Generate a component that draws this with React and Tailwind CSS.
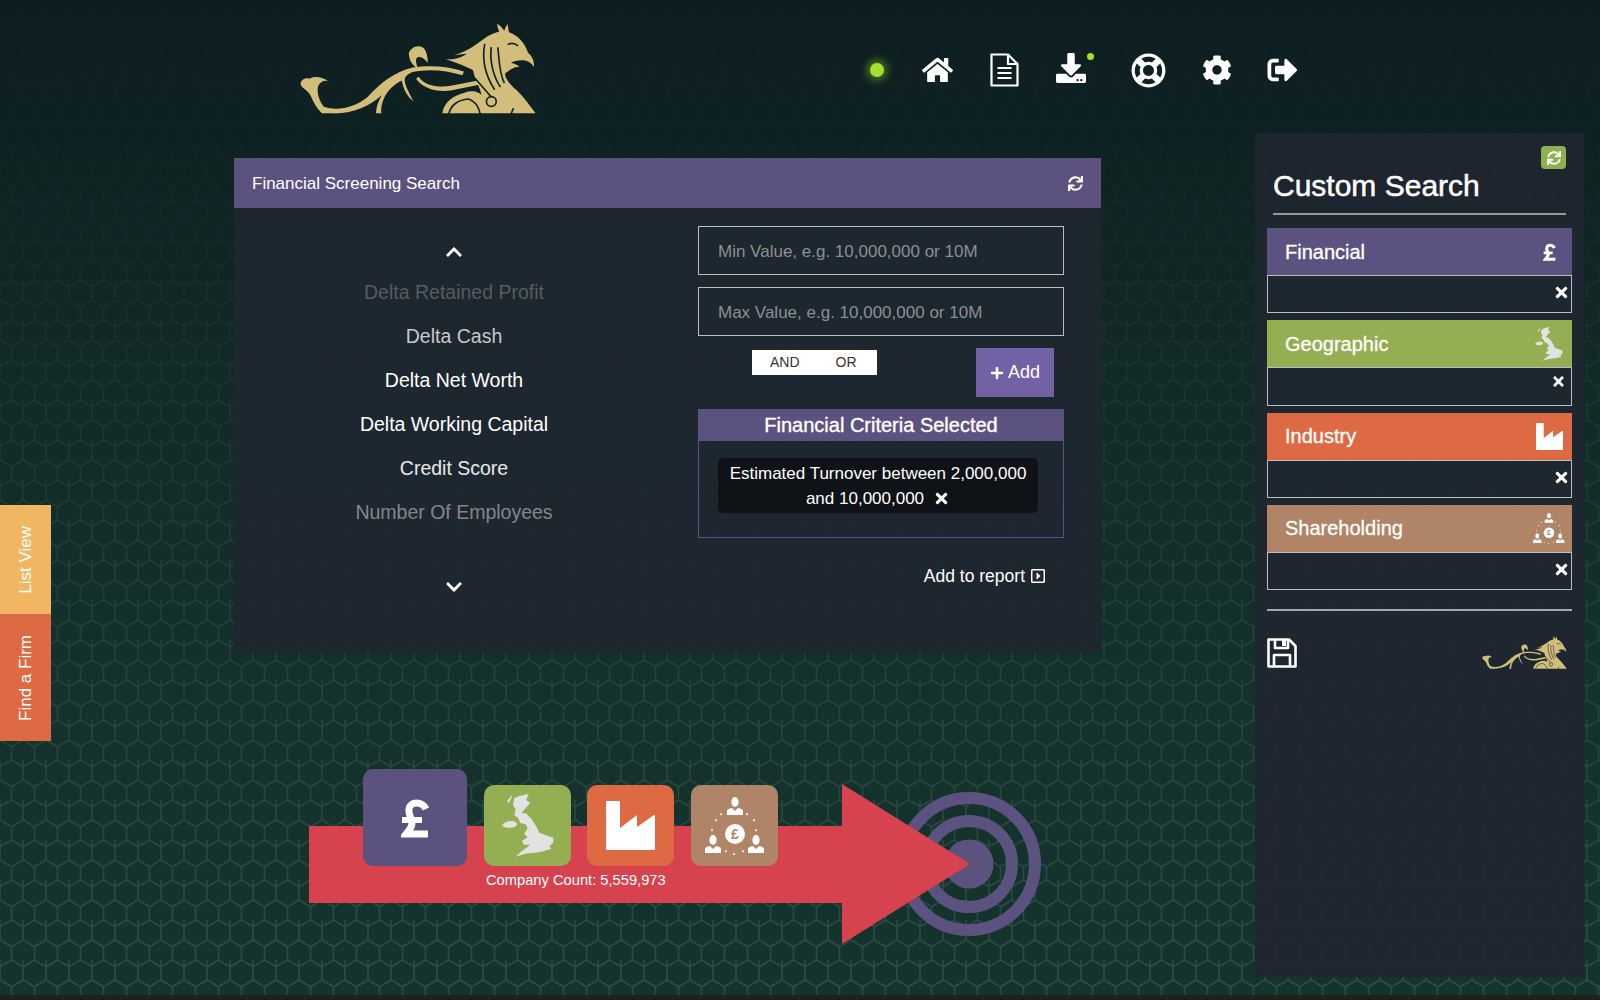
import React from 'react'
import {
  FaHome, FaDownload, FaRegLifeRing, FaCog, FaSignOutAlt, FaSync, FaChevronUp, FaChevronDown,
  FaPlus, FaTimes, FaRegCaretSquareRight,
} from 'react-icons/fa'

const Griffin = ({ className, line = '#0f2021' }) => (
  <svg viewBox="55 36 722 278" className={className} fill="#d3bd7a">
    <path d="M112 300 C100 285 95 272 88 258 C78 240 66 238 58 226 C54 212 70 200 84 206 C98 198 122 200 142 213 C128 210 118 216 112 226 C106 240 110 268 128 292 C170 305 220 296 262 262 C300 222 340 186 400 172 C450 164 510 168 556 184 L552 196 C500 178 440 176 400 186 C388 190 378 198 376 206 C372 222 390 250 402 276 C384 262 372 240 366 212 C344 222 322 244 312 266 C306 280 302 296 304 312 L288 312 C288 292 296 272 306 256 C272 288 212 316 150 312 L122 312 Z" />
    <path d="M418 200 C434 226 474 234 516 228 L600 212 L606 224 L516 242 C470 248 430 234 410 206 Z" />
    <path d="M388 128 C394 112 412 102 430 110 C442 118 446 140 446 158 C438 148 428 138 416 140 C408 144 408 156 416 174 C400 168 388 150 388 128 Z" />
    <path d="M500 146 C530 150 550 140 566 130 C550 130 536 134 526 134 C570 124 600 96 630 76 C640 70 652 66 664 62 C660 52 658 46 658 38 C668 44 674 52 680 60 C682 52 684 46 690 40 C692 50 692 58 694 64 C720 72 742 96 752 126 C762 136 772 148 770 170 C762 158 752 152 740 150 C730 150 712 150 700 158 C712 160 720 164 726 170 C710 170 694 180 682 190 C682 208 700 226 716 240 C740 262 758 290 775 312 L490 312 C495 280 520 258 560 248 C590 240 600 248 610 256 C606 232 590 210 584 180 C570 172 540 160 500 146 Z" />
    <g fill="none" stroke={line} strokeWidth="5">
      <path d="M510 314 C516 286 540 270 570 268 C590 274 602 294 606 314" />
      <path d="M620 100 C612 140 618 190 650 240 M640 110 C634 150 646 200 668 232 M590 205 L640 262" />
      <circle cx="640" cy="276" r="15" />
      <path d="M690 102 C700 96 712 98 722 106 M700 314 L708 296 M660 110 C664 150 664 190 680 220" />
    </g>
  </svg>
)

const Pound = ({ className }) => (
  <svg viewBox="0 0 28 40" className={className} fill="none" stroke="#fff" strokeWidth="7">
    <path d="M25 11 C21 3 9 3 8 11 C7 17 11 20 11 25 C11 30 8 32 5 36 L27 36" />
    <path d="M1 22 L21 22" strokeWidth="6" />
  </svg>
)

const UkMap = ({ className }) => (
  <svg viewBox="0 0 157 190" className={className} fill="#e2e2e2">
    <path d="M37 13 L55 5 L81 0 L73 17 L85 27 L71 43 L59 57 L73 59 L89 75 L103 97 L113 117 L135 125 L155 133 L155 147 L143 157 L149 165 L125 173 L100 177 L70 180 L41 189 L59 173 L77 160 L85 153 L65 153 L61 140 L77 131 L67 120 L77 105 L73 93 L55 87 L49 73 L37 63 L41 45 L33 33 Z" />
    <path d="M0 95 C5 85 20 80 35 82 C45 85 48 90 42 97 C30 103 10 105 0 95 Z" />
    <path d="M15 22 L28 5 L30 10 L20 27 Z" />
  </svg>
)

const Factory = ({ className }) => (
  <svg viewBox="0 0 49 49" className={className} fill="#fff">
    <path d="M0 1 Q0 0 1 0 L13 0 Q14 0 14 1 L14 27 L31 14 L31 26 L48 14 Q49 14 49 15 L49 48 Q49 49 48 49 L1 49 Q0 49 0 48 Z" />
  </svg>
)

const Person = ({ x, y }) => (
  <g transform={`translate(${x} ${y})`}>
    <ellipse cx="0" cy="-4" rx="3.6" ry="5" />
    <path d="M-8 9 L-8 5 Q-8 3 -3 2 L0 5 L3 2 Q8 3 8 5 L8 9 Z" />
  </g>
)

const Shareholders = ({ className }) => (
  <svg viewBox="0 0 60 58" className={className} fill="#fff">
    <Person x="30" y="9" />
    <Person x="8" y="47" />
    <Person x="51" y="47" />
    <circle cx="30" cy="37" r="10" />
    <text x="30" y="42" textAnchor="middle" fontSize="14" fontWeight="700" fontFamily="Liberation Sans, sans-serif" fill="#b08466">£</text>
    {[[16, 18], [42, 18], [11, 24], [49, 24], [7, 34], [51, 34], [21, 55], [29, 58], [38, 55]].map(([cx, cy]) => (
      <circle key={`${cx}-${cy}`} cx={cx} cy={cy - 0.8} r="1" />
    ))}
  </svg>
)

const DocIcon = ({ className }) => (
  <svg viewBox="0 0 29 34" className={className} fill="none" stroke="#fff" strokeWidth="2.2" strokeLinejoin="round">
    <path d="M1.5 1.5 H18 L27.5 11 V32.5 H1.5 Z" />
    <path d="M18 1.5 V11 H27.5" />
    <path d="M7.5 15 H21.5 M7.5 20 H21.5 M7.5 25 H21.5" strokeWidth="2" />
  </svg>
)

const SaveIcon = ({ className }) => (
  <svg viewBox="0 0 30 30" className={className} fill="none" stroke="#fff" strokeWidth="2.6" strokeLinejoin="round">
    <path d="M1.5 1.5 H22 L28.5 8 V28.5 H1.5 Z" />
    <path d="M8 1.5 V10 H21 V1.5" />
    <path d="M7 28.5 V17 H23 V28.5" />
    <rect x="15" y="2" width="4" height="6" fill="#fff" stroke="none" />
  </svg>
)

const filters = [
  { name: 'Financial', bg: 'bg-[#5c5280]', pr: 'pr-[16px]', xCls: 'right-[1px] top-[8px] h-[17px] w-[17px]', icon: <Pound className="h-[18px] w-[13px]" /> },
  { name: 'Geographic', bg: 'bg-[#94ae52]', pr: 'pr-[9px]', xCls: 'right-[5px] top-[6px] h-[15px] w-[15px]', icon: <UkMap className="h-[34px] w-[28px]" /> },
  { name: 'Industry', bg: 'bg-[#de6a44]', pr: 'pr-[9px]', xCls: 'right-[1px] top-[8px] h-[17px] w-[17px]', icon: <Factory className="h-[27px] w-[27px]" /> },
  { name: 'Shareholding', bg: 'bg-[#b08466]', pr: 'pr-[7px]', xCls: 'right-[1px] top-[8px] h-[17px] w-[17px]', icon: <Shareholders className="h-[31px] w-[32px]" /> },
]

const measures = [
  { label: 'Delta Retained Profit', cls: 'text-white/25' },
  { label: 'Delta Cash', cls: 'text-white/75' },
  { label: 'Delta Net Worth', cls: 'text-white' },
  { label: 'Delta Working Capital', cls: 'text-white' },
  { label: 'Credit Score', cls: 'text-white/90' },
  { label: 'Number Of Employees', cls: 'text-white/45' },
]

const HexBackground = () => (
  <svg className="absolute inset-0 h-full w-full" aria-hidden="true">
    <defs>
      <pattern id="hex" width="23" height="40" patternUnits="userSpaceOnUse">
        <path d="M11.5 0 L23 6.7 L23 20 L11.5 26.7 L0 20 L0 6.7 Z M11.5 26.7 L11.5 40 M0 6.7 L0 0 M23 6.7 L23 0" fill="none" stroke="#2c4f48" strokeWidth="1.6" />
      </pattern>
      <linearGradient id="fade" x1="0" x2="0" y1="0" y2="1">
        <stop offset="0" stopColor="#0d1d1f" stopOpacity="0.97" />
        <stop offset="0.15" stopColor="#0e2021" stopOpacity="0.9" />
        <stop offset="0.5" stopColor="#102625" stopOpacity="0.5" />
        <stop offset="1" stopColor="#17362f" stopOpacity="0.08" />
      </linearGradient>
    </defs>
    <rect width="100%" height="100%" fill="#15332d" />
    <rect width="100%" height="100%" fill="url(#hex)" />
    <rect width="100%" height="100%" fill="url(#fade)" />
  </svg>
)

const App = () => {
  return (
    <div className="relative h-[1000px] overflow-hidden font-['Liberation_Sans',Arial,sans-serif] text-white">
      <HexBackground />

      {/* Side tabs */}
      <div className="absolute left-0 top-[505px] flex w-[51px] flex-col text-[17px]">
        <div className="flex h-[109px] items-center justify-center bg-[#f0b661]">
          <span className="rotate-180 [writing-mode:vertical-rl]">List View</span>
        </div>
        <div className="flex h-[127px] items-center justify-center bg-[#de6a44]">
          <span className="rotate-180 [writing-mode:vertical-rl]">Find a Firm</span>
        </div>
      </div>

      <div className="relative flex h-[995px]">
        <div className="min-w-0 flex-1">
          {/* Top bar */}
          <header className="flex h-[158px] items-start">
            <Griffin className="ml-[298px] mt-[23px] h-[91px] w-[240px] shrink-0" />
            <div className="relative z-10 ml-[332px] mt-[50px] flex h-[40px] shrink-0 items-center">
              <span className="h-[14px] w-[14px] rounded-full bg-[#a6e02f] shadow-[0_0_8px_3px_rgba(150,220,40,0.5)]" />
              <FaHome className="ml-[38px] h-[28px] w-[31px]" />
              <DocIcon className="ml-[37px] h-[34px] w-[29px]" />
              <div className="relative ml-[36px] -mt-[4px]">
                <FaDownload className="h-[30px] w-[32px]" />
                <span className="absolute -right-[7px] top-0 h-[7px] w-[7px] rounded-full bg-[#a6e02f]" />
              </div>
              <FaRegLifeRing className="ml-[44px] h-[35px] w-[35px]" />
              <FaCog className="ml-[36px] h-[30px] w-[30px]" />
              <FaSignOutAlt className="ml-[35px] h-[30px] w-[31px]" />
            </div>
          </header>

          {/* Financial search panel */}
          <section className="ml-[234px] h-[495px] w-[867px] bg-[#1f2730]/95">
            <div className="flex h-[50px] items-center justify-between bg-[#5c5280] pb-px pl-[18px] pr-[18px] pt-[2px] text-[17px]">
              <span>Financial Screening Search</span>
              <FaSync className="h-[15px] w-[15px]" />
            </div>
            <div className="flex">
              <div className="mr-[24px] flex w-[440px] flex-col items-center pt-[35px]">
                <FaChevronUp className="h-[18px] w-[18px]" />
                <ul className="mt-[9px] flex flex-col items-center text-center text-[19.5px] leading-[44px]">
                  {measures.map((m) => (
                    <li key={m.label} className={m.cls}>{m.label}</li>
                  ))}
                </ul>
                <FaChevronDown className="mt-[44px] h-[18px] w-[18px]" />
              </div>
              <div className="w-[366px] pt-[18px]">
                <input readOnly placeholder="Min Value, e.g. 10,000,000 or 10M" className="h-[49px] w-full border border-[#b9bcc0] bg-transparent px-[19px] pt-[2px] text-[17px] placeholder:text-[#8b8f95] outline-none" />
                <input readOnly placeholder="Max Value, e.g. 10,000,000 or 10M" className="mt-[12px] h-[49px] w-full border border-[#b9bcc0] bg-transparent px-[19px] pt-[2px] text-[17px] placeholder:text-[#8b8f95] outline-none" />
                <div className="flex items-start justify-between pl-[54px] pr-[10px] pt-[12px]">
                  <div className="mt-[2px] flex h-[25px] w-[125px] items-center bg-white text-[14px] text-[#333]">
                    <span className="ml-[18px]">AND</span>
                    <span className="ml-[36px]">OR</span>
                  </div>
                  <button className="flex h-[49px] w-[78px] items-center justify-center gap-[4px] bg-[#7262a5] text-[18px]">
                    <FaPlus className="h-[14px] w-[14px]" /> Add
                  </button>
                </div>
                <div className="mt-[12px] h-[129px] border border-[#5c5280]">
                  <div className="bg-[#5c5280] py-[3px] text-center text-[20px] leading-[25px] [-webkit-text-stroke:0.35px_white]">Financial Criteria Selected</div>
                  <div className="ml-[19px] mr-[25px] mt-[17px] rounded-[5px] bg-[#0f1216] px-[5px] pb-[2px] pt-[4px] text-center text-[17px] leading-[24.5px]">
                    Estimated Turnover between 2,000,000 and 10,000,000
                    <FaTimes className="ml-[9px] inline h-[17px] w-[17px] align-[-3px]" />
                  </div>
                </div>
                <div className="mt-[25px] flex items-center justify-end gap-[5px] pr-[18px] text-[17.5px]">
                  Add to report <FaRegCaretSquareRight className="h-[16px] w-[16px]" />
                </div>
              </div>
            </div>
          </section>

          {/* Search funnel */}
          <div className="relative ml-[309px] mt-[115px] h-[180px] w-[740px]">
            <svg viewBox="0 0 740 180" className="absolute inset-0 h-full w-full">
              <g fill="none" stroke="#5c5280" strokeWidth="12">
                <circle cx="660" cy="96" r="66" />
                <circle cx="660" cy="96" r="43" />
              </g>
              <circle cx="660" cy="96" r="24.5" fill="#5c5280" />
              <path d="M0 58 L533 58 L533 16 L661 96 L533 176 L533 135 L0 135 Z" fill="#d7424f" />
            </svg>
            <div className="relative flex items-end pl-[54px] pt-px">
              <div className="flex h-[97px] w-[104px] items-center justify-center rounded-[10px] bg-[#5c5280]">
                <Pound className="h-[40px] w-[28px]" />
              </div>
              <div className="ml-[17px] flex h-[81px] w-[87px] items-center justify-center rounded-[10px] bg-[#94ae52]">
                <UkMap className="h-[63px] w-[52px]" />
              </div>
              <div className="ml-[16px] flex h-[81px] w-[87px] items-center justify-center rounded-[10px] bg-[#de6a44]">
                <Factory className="h-[49px] w-[49px]" />
              </div>
              <div className="ml-[17px] flex h-[81px] w-[87px] items-center justify-center rounded-[10px] bg-[#b08466]">
                <Shareholders className="h-[58px] w-[60px]" />
              </div>
            </div>
            <p className="relative ml-[177px] mt-[5px] text-[14.7px] leading-[18px]">Company Count: 5,559,973</p>
          </div>
        </div>

        {/* Custom search sidebar */}
        <aside className="mb-[18px] mr-[16px] mt-[133px] w-[329px] shrink-0 bg-[#1f2730]/95 px-[12px]">
          <div className="flex justify-end pr-[6px] pt-[13px]">
            <span className="flex h-[23px] w-[25px] items-center justify-center rounded-[4px] bg-[#8fb04f]">
              <FaSync className="h-[14px] w-[14px]" />
            </span>
          </div>
          <h2 className="ml-[6px] text-[30px] leading-[34px] [-webkit-text-stroke:0.5px_white]">Custom Search</h2>
          <div className="ml-[6px] mr-[6px] mt-[10px] h-[2px] bg-[#94979b]" />
          <div className="mt-[13px] flex flex-col gap-[7px]">
            {filters.map((f) => (
              <div key={f.name}>
                <div className={`flex h-[47px] items-center justify-between pl-[18px] text-[20px] [-webkit-text-stroke:0.3px_white] ${f.bg} ${f.pr}`}>
                  <span>{f.name}</span>
                  {f.icon}
                </div>
                <div className="relative h-[38.33px] border border-[#b9bcc0]">
                  <FaTimes className={`absolute ${f.xCls}`} />
                </div>
              </div>
            ))}
          </div>
          <div className="mt-[19px] h-[2px] bg-[#a5a8ab]" />
          <div className="mt-[25px] flex items-center justify-between pr-[5px]">
            <SaveIcon className="h-[30px] w-[30px]" />
            <Griffin className="h-[33px] w-[85px]" line="#1f2730" />
          </div>
        </aside>
      </div>

      {/* Bottom edge of the page backdrop */}
      <div className="relative h-[5px] bg-[#1c2216]" />
    </div>
  )
}

export default App
